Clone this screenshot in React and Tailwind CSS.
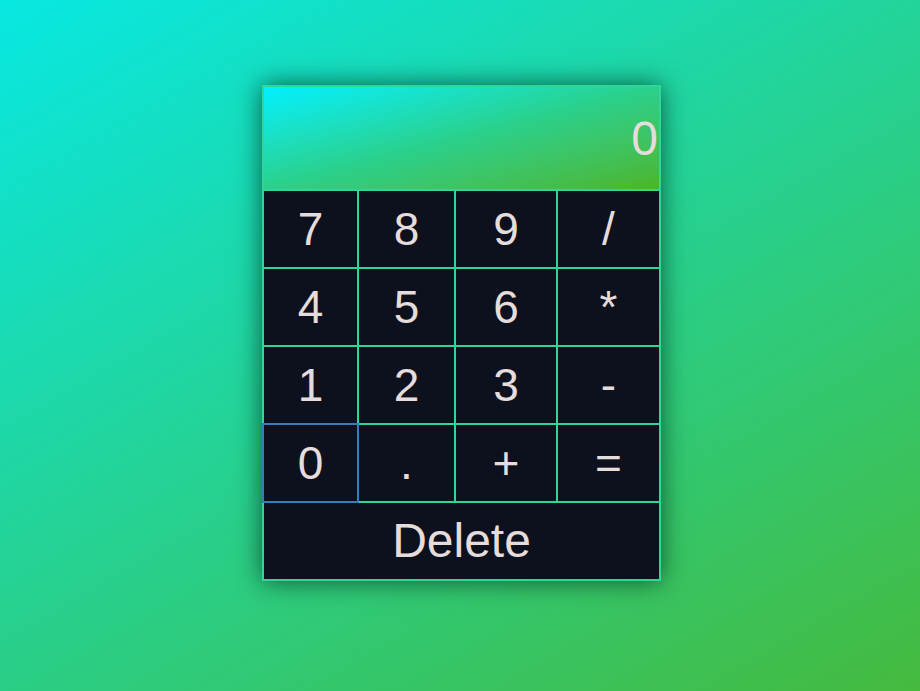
import { useState } from 'react';

const keys = [
    ['7', '8', '9', '/'],
    ['4', '5', '6', '*'],
    ['1', '2', '3', '-'],
    ['0', '.', '+', '='],
];

const App = () => {
    const [display, setDisplay] = useState('0');

    const handleKey = (k) => {
        if (k === '=') {
            try {
                // eslint-disable-next-line no-new-func
                setDisplay(String(Function('return (' + display + ')')()));
            } catch (e) {
                setDisplay('Error');
            }
            return;
        }
        setDisplay(prev => (prev === '0' || prev === 'Error' ? k : prev + k));
    };

    const handleDelete = () => {
        setDisplay(prev => (prev.length > 1 ? prev.slice(0, -1) : '0'));
    };

    return (
        <div
            className="min-h-[691px] w-full flex justify-center items-start pt-[85px] pl-[3px] bg-[linear-gradient(150deg,#08e8e2,#45ba3e)]"
            style={{ fontFamily: '"Liberation Sans", Arial, sans-serif' }}
        >
            <div className="w-[399px] border-2 border-[#2ed796] bg-[#2ed796] shadow-[0_0_24px_rgba(0,45,30,0.75)]">
                <div className="h-[102px] flex items-center justify-end pr-[1px] pt-[2px] bg-gradient-to-br from-[#00f0ff] via-[#2ad08a] to-[#4cb521] text-[#e6dcdc] text-[48px] leading-none">
                    {display}
                </div>
                <div className="grid grid-cols-[93px_95px_100px_101px] gap-[2px] mt-[2px]">
                    {keys.flat().map(k => (
                        <button
                            key={k}
                            type="button"
                            onClick={() => handleKey(k)}
                            className={`h-[76px] flex items-center justify-center bg-[#0d111d] text-[#e6dcdc] text-[46px] leading-none ${k === '0' ? 'outline-2 outline-solid outline-[#3a7db6] relative z-10' : ''}`}
                        >
                            {k}
                        </button>
                    ))}
                    <button
                        type="button"
                        onClick={handleDelete}
                        className="col-span-4 h-[76px] flex items-center justify-center bg-[#0d111d] text-[#e6dcdc] text-[48px] leading-none"
                    >
                        Delete
                    </button>
                </div>
            </div>
        </div>
    );
};

export default App;
